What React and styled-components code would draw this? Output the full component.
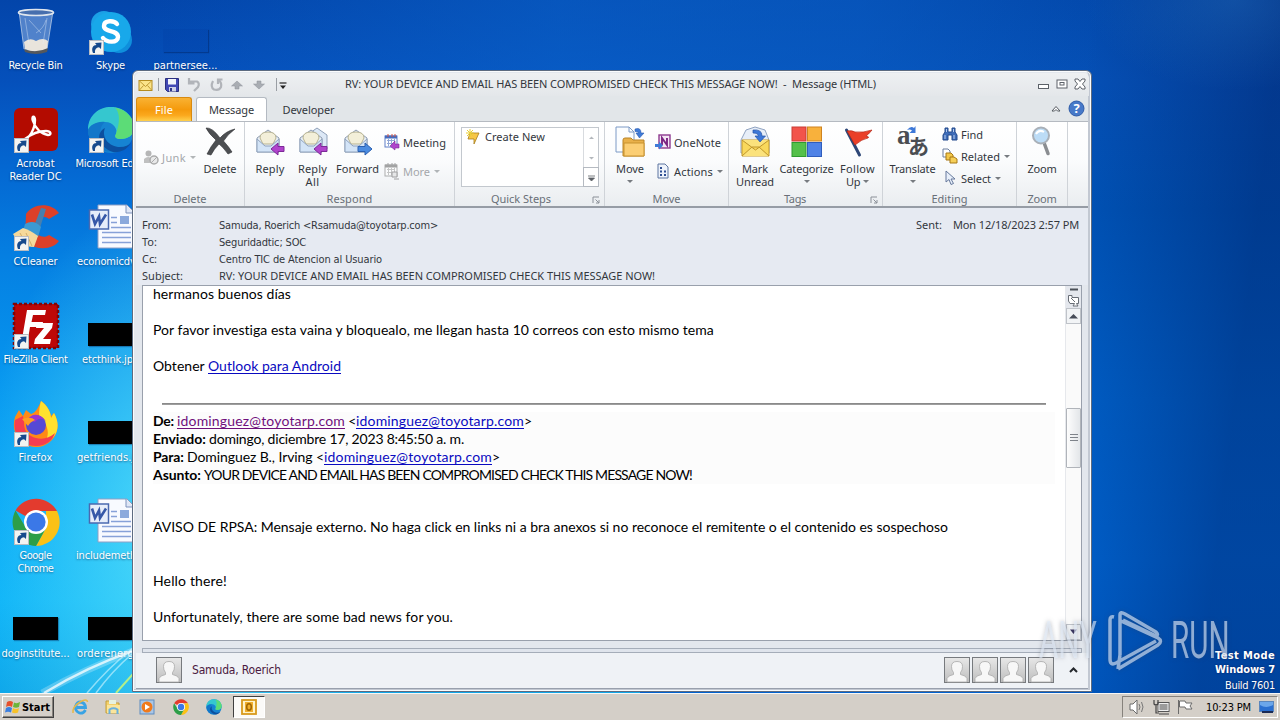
import React, { useLayoutEffect, useRef } from "react";
import styled, { createGlobalStyle } from "styled-components";

const UI = `"Noto Sans", "Open Sans", sans-serif`;
const TAHOMA = `"DejaVu Sans Condensed", "DejaVu Sans", sans-serif`;
const BODY = `Lato, "Open Sans", sans-serif`;

const Global = createGlobalStyle`
  * { box-sizing: border-box; }
  body { margin: 0; overflow: hidden; font: 11px/13px ${UI}; color: #33373d; }
  svg { display: block; flex: none; }
`;

/* Text tracked so that it fills a given measure. */
const Tracked = styled.span`
  display: inline-block;
  white-space: pre;
`;
function Fit({ w, children, ...rest }) {
  const ref = useRef(null);
  useLayoutEffect(() => {
    const el = ref.current;
    el.style.letterSpacing = "0px";
    const n = el.textContent.length;
    el.style.letterSpacing = `${(w - el.getBoundingClientRect().width) / n}px`;
  }, [w, children]);
  return <Tracked ref={ref} {...rest}>{children}</Tracked>;
}

/* ---------- desktop ---------- */
const Screen = styled.div`
  position: relative;
  width: 1280px;
  height: 720px;
  overflow: hidden;
  display: flex;
  flex-direction: column;
`;
const Wallpaper = styled.div`
  flex: 1;
  position: relative;
  overflow: hidden;
  background:
    linear-gradient(130deg, transparent 1210px, rgba(110, 180, 230, 0.28) 1214px, rgba(60, 140, 210, 0.06) 1219px) 0 0 / 100% 62px no-repeat,
    radial-gradient(150px 90px at 1235px 0, rgba(50, 130, 205, 0.3), transparent),
    radial-gradient(220px 330px at 190px 520px, rgba(110, 240, 250, 0.75), transparent) no-repeat,
    linear-gradient(90deg, transparent 133px, rgba(10, 100, 205, 0.55) 560px, rgba(10, 95, 200, 0.5) 860px, transparent 1100px) 0 0 / 1280px 72px no-repeat,
    linear-gradient(180deg, #0345aa 0, #0550bb 80px, #0468d2 170px, #0580e2 260px, #0694ee 370px, #06a4f5 480px, #0cb2f8 600px, #10a8ea 693px) 0 0 / 640px 100% no-repeat,
    linear-gradient(97deg, transparent 1085px, rgba(0, 24, 88, 0.42) 1275px),
    linear-gradient(180deg, #0349ac 0, #0550b6 80px, #0054b8 210px, #0062cc 400px, #0067d6 560px, #0062d0 693px);
`;
const Beams = styled.svg`
  position: absolute;
  left: 0;
  bottom: 0;
`;
const IconGrid = styled.div`
  display: grid;
  grid-template-columns: repeat(3, 75px);
  grid-auto-rows: 98px;
  grid-auto-flow: column;
  grid-template-rows: repeat(7, 98px);
  margin-left: -2px;
`;
const Shortcut = styled.div`
  display: flex;
  flex-direction: column;
  align-items: center;
  padding-top: 8px;
  color: #fff;
  font: 11px/13px ${TAHOMA};
  text-shadow: 0 1px 2px rgba(0, 20, 60, 0.5);
`;
const Picture = styled.div`
  position: relative;
  width: 48px;
  height: 48px;
  margin-bottom: 3px;
  display: flex;
  align-items: center;
  justify-content: center;
`;
const ArrowBadge = styled.svg`
  position: absolute;
  left: 2px;
  bottom: 1px;
`;
const Thumb = styled.div`
  width: 45px;
  height: 23px;
  margin-top: 17px;
  background: ${(p) => (p.$clear ? "rgba(0,50,150,.12)" : "#000")};
  box-shadow: 1px 1px 1px rgba(0, 20, 70, 0.35);
`;

const Arrow = () => (
  <ArrowBadge width="15" height="15" viewBox="0 0 15 15">
    <rect x=".5" y=".5" width="14" height="14" fill="#f4f4f2" stroke="#b9bcc2" />
    <path d="M4 13C2 8 4 5 7.500 5L6 3 12.500 2.500 12 9 10 7.200C7 7.500 5.500 9.500 6 13Z" fill="#174a8c" />
  </ArrowBadge>
);
const Bin = () => (
  <svg width="40" height="48" viewBox="0 0 40 48">
    <path d="M3 3L8 41Q20 47 31 41L37 3Z" fill="#83a9dc" fillOpacity=".6" stroke="#b9cbe6" strokeWidth=".8" />
    <path d="M8 34Q14 29 20 33Q27 29 32 33L31 41Q20 46 9 41Z" fill="#e9e4dc" />
    <path d="M8 41Q20 46 32 40L31 44Q20 48 9 44Z" fill="#55585c" />
    <ellipse cx="20" cy="4.500" rx="17.500" ry="3" fill="#476fae" stroke="#dfe6ee" strokeWidth="1.600" />
    <path d="M9 10L13 36M31 10L27 36M13 12L25 25M30 12Q28 20 20 25" stroke="#e4edfa" strokeOpacity=".4" fill="none" />
  </svg>
);
const Skype = () => (
  <svg width="44" height="46" viewBox="0 0 44 46">
    <circle cx="15" cy="15" r="13" fill="#1ba0e6" />
    <circle cx="30" cy="31" r="13" fill="#0f8fdc" />
    <circle cx="22" cy="23" r="20" fill="#18a8ea" />
    <path d="M28 15C25 11 15 11 15 17C15 24 29 20 29 28C29 34 18 34 14 29" fill="none" stroke="#fff" strokeWidth="4.400" strokeLinecap="round" />
  </svg>
);
const Acrobat = () => (
  <svg width="46" height="46" viewBox="0 0 46 46">
    <rect x="1" y="1" width="44" height="43" rx="6" fill="#b30b00" />
    <path d="M11 33C16 31 22 23 22 13C22 8 18 9 20 14C22 21 28 27 35 28C39 28 38 24 33 24C25 24 17 28 12 32" fill="none" stroke="#fff" strokeWidth="2.400" />
  </svg>
);
const Edge = ({ s = 48 }) => (
  <svg width={s} height={s} viewBox="0 0 48 48">
    <circle cx="24" cy="24" r="23" fill="#1684d2" />
    <path d="M1 24C1 9 12 1 24 1C38 1 47 11 47 22C47 29 41 33 34 33C29 33 27 31 29 28C31 24 27 16 18 16C9 16 3 20 1 24Z" fill="#35c7cf" />
    <path d="M28 1.500C40 4 47 12 47 22C47 29 41 33 34 33C29 33 27 31 29 28C31 22 35 9 28 1.500Z" fill="#5cdc77" />
    <path d="M18 16C10 22 12 38 27 45C15 48 1 38 1 24C3 19 10 15 18 16Z" fill="#1277c9" />
    <path d="M18 22C14 31 22 41 33 41C38 41 42 39 44 37C39 45 31 47 26 46C11 41 8 27 18 22Z" fill="#0c4f9f" />
  </svg>
);
const CCleaner = () => (
  <svg width="48" height="48" viewBox="0 0 48 48">
    <path d="M47 9C39-2 21-1 14 10L13 36C15 40 19 42 23 43C33 46 43 43 47 37L37 31C32 35 24 32 23 24C22 15 31 10 37 15Z" fill="#dc4029" />
    <path d="M29 4L34 5 28 24 22 22Z" fill="#477fae" />
    <path d="M13 20Q22 15 29 23L26 33 11 27Z" fill="#3b9ad3" />
    <path d="M11 24Q18 26 26 32L22 43Q8 43 1 30Z" fill="#f5d99b" />
    <path d="M8 29L15 42M14 29L20 42" stroke="#d5ad66" />
  </svg>
);
const FileZilla = () => (
  <svg width="48" height="48" viewBox="0 0 48 48">
    <rect x="2" y="2" width="44" height="44" fill="#bd0808" stroke="#7e0508" strokeWidth="2.500" strokeDasharray="3 2" />
    <path d="M10 37L15 8H34L33 13H21L19.500 20H31L30 25H18L16 37Z" fill="#fff" />
    <path d="M25 21H41L40 26 31 37H39L38 42H22L23 37 32 26H24Z" fill="#fff" />
  </svg>
);
const Firefox = () => (
  <svg width="48" height="48" viewBox="0 0 48 48">
    <path d="M3 17L7 10 11 16 14 10 19 14C24 13 27 6 29 1C35 5 38 11 39 16L42 13C52 31 39 47 24 47C10 47-2 34 3 17Z" fill="#ff8a16" />
    <path d="M29 1C36 6 39 13 39 18L42 13C50 27 44 40 32 43C40 33 34 22 27 16C27 9 28 4 29 1Z" fill="#ffe12e" />
    <path d="M3 20C0 35 11 46 24 46C34 46 41 40 43 33C36 40 26 40 19 36C13 33 12 27 12 22L11 16Z" fill="#f53d51" />
    <circle cx="24" cy="25" r="10" fill="#5549d5" />
    <path d="M15 20Q24 9 34 21C29 17 25 19 23 22Z" fill="#9b34d0" />
    <path d="M10 19Q19 16 23 20Q18 22 16 26Z" fill="#ff9e22" />
  </svg>
);
const Chrome = ({ s = 48 }) => (
  <svg width={s} height={s} viewBox="0 0 48 48">
    <path d="M24 24L3.500 12.500A24 24 0 0 1 45 13H24Z" fill="#e33b2e" />
    <path d="M45 13A24 24 0 0 1 24 48L34 30L34 13Z" fill="#fbc116" />
    <path d="M3.500 12.500A24 24 0 0 0 24 48L34 30L14 30Z" fill="#2d9e48" />
    <circle cx="24" cy="24" r="12" fill="#fff" />
    <circle cx="24" cy="24" r="9.600" fill="#3b78e7" />
  </svg>
);
const WordDoc = () => (
  <svg width="48" height="48" viewBox="0 0 48 48">
    <path d="M11 1H40L47 8V44H11Z" fill="#f8faff" stroke="#8f9fc4" />
    <path d="M39 1V9H47" fill="#dfe6f5" stroke="#7f93bd" />
    <path d="M24 13.500H30M24 18.500H30M24 23.500H44M15 28.500H44M15 33.500H44M15 38.500H44" stroke="#87a1d8" strokeWidth="1.500" />
    <rect x="33" y="12" width="9" height="8" fill="#8ba9dc" />
    <rect x="2.500" y="6" width="19" height="19" fill="#e6edfa" stroke="#4a69b0" strokeWidth="1.500" />
    <path d="M5 10.500L8 20 12 12.500 13 20 19 10.500" fill="none" stroke="#3658a8" strokeWidth="2.600" />
  </svg>
);

const desktop = [
  { icon: <Bin />, label: [["Recycle Bin", 54]] },
  { icon: <Acrobat />, link: true, label: [["Acrobat", 38], ["Reader DC", 52]] },
  { icon: <CCleaner />, link: true, label: [["CCleaner", 44]] },
  { icon: <FileZilla />, link: true, label: [["FileZilla Client", 64]] },
  { icon: <Firefox />, link: true, label: [["Firefox", 34]] },
  { icon: <Chrome />, link: true, label: [["Google", 32], ["Chrome", 36]] },
  { icon: <Thumb />, label: [["doginstitute...", 68]] },
  { icon: <Skype />, link: true, label: [["Skype", 29]] },
  { icon: <Edge />, link: true, label: [["Microsoft Edge", 70]] },
  { icon: <WordDoc />, label: [["economicdv...", 67]] },
  { icon: <Thumb />, label: [["etcthink.jpg", 57]] },
  { icon: <Thumb />, label: [["getfriends.j...", 67]] },
  { icon: <WordDoc />, label: [["includemeth...", 69]] },
  { icon: <Thumb />, label: [["orderenerg...", 67]] },
  { icon: <Thumb $clear />, label: [["partnersee...", 64]] },
];

/* ---------- message window ---------- */
const Window = styled.section`
  position: absolute;
  left: 132px;
  top: 70px;
  width: 960px;
  height: 622px;
  padding: 2px 3px 2px;
  display: flex;
  flex-direction: column;
  background: #e3e7ed;
  border: 1px solid #5d6b80;
  border-radius: 6px 6px 0 0;
  box-shadow: inset 0 0 0 1px #fbfcfd, inset -2px -1px 0 1px #c2c8d2;
`;
const TitleBar = styled.header`
  display: flex;
  align-items: center;
  height: 23px;
  margin: 0 -1px;
  padding: 0 3px 0 2px;
  border-radius: 5px 5px 0 0;
  background: linear-gradient(#eef0f2, #e4e7ea);
`;
const QuickBar = styled.div`
  display: flex;
  width: 208px;
  height: 16px;
  align-items: center;
`;
const Title = styled.div`
  flex: 1;
  padding-bottom: 2px;
`;
const Controls = styled.div`
  display: flex;
  gap: 6px;
  align-items: center;
  margin-top: -2px;
`;
const Tabs = styled.nav`
  display: flex;
  height: 25px;
  background: #e2e6e9;
  align-items: flex-end;
`;
const Tab = styled.div`
  width: ${(p) => p.$w}px;
  height: 24px;
  display: flex;
  align-items: center;
  justify-content: center;
  ${(p) => p.$kind === "file" && `
    color: #fff;
    border: 1px solid #d88a10;
    border-bottom: 0;
    border-radius: 3px 3px 0 0;
    background: linear-gradient(#f9b233, #f59a0c 50%, #fba81d 75%, #ffd04c);
    margin-right: 4px;
  `}
  ${(p) => p.$kind === "active" && `
    height: 25px;
    padding-bottom: 2px;
    margin-bottom: -1px;
    background: #fff;
    border: 1px solid #b4bac2;
    border-bottom: 0;
    border-radius: 3px 3px 0 0;
  `}
`;
const TabTools = styled.div`
  margin-left: auto;
  display: flex;
  align-items: center;
  gap: 7px;
  height: 25px;
  padding-right: 3px;
`;
const Ribbon = styled.div`
  display: flex;
  height: 87px;
  border-top: 1px solid #b5bac1;
  border-bottom: 2px solid #969ca5;
  background: linear-gradient(#fff, #fbfcfd 45%, #eaedf0);
`;
const Group = styled.div`
  width: ${(p) => p.$w}px;
  display: flex;
  flex-direction: column;
  border-right: 1px solid #cfd3d8;
`;
const GroupBody = styled.div`
  display: flex;
  height: 70px;
  padding-left: ${(p) => p.$pad || 0}px;
`;
const GroupName = styled.div`
  position: relative;
  height: 14px;
  text-align: center;
  line-height: 14px;
  color: #696f78;
  padding-right: ${(p) => p.$pr || 0}px;
`;
const Launcher = styled.svg`
  position: absolute;
  right: 4px;
  top: 4px;
`;
const Big = styled.div`
  width: ${(p) => p.$w}px;
  display: flex;
  flex-direction: column;
  align-items: center;
  padding-top: 4px;
  > svg { margin-bottom: 4px; overflow: visible; }
`;
const Line = styled.span`
  display: flex;
  align-items: center;
  height: 13px;
`;
const SmallCol = styled.div`
  display: flex;
  flex-direction: column;
  padding-top: ${(p) => p.$top}px;
  padding-left: ${(p) => p.$left || 0}px;
  gap: ${(p) => p.$gap}px;
`;
const Small = styled.div`
  display: flex;
  align-items: center;
  height: 16px;
  gap: 3px;
  color: ${(p) => (p.$off ? "#a4a7ab" : "#33373d")};
  ${(p) => p.$off && "svg { filter: grayscale(1); opacity: .6; } i { opacity: .55; }"}
`;
const Caret = styled.i`
  border: 3px solid transparent;
  border-top-color: #777b80;
  border-bottom: 0;
  margin: ${(p) => p.$m || "0 0 0 1px"};
`;
const Gallery = styled.div`
  display: flex;
  width: 138px;
  height: 60px;
  margin-top: 5px;
  border: 1px solid #c3c8ce;
  background: #fff;
`;
const GalleryItem = styled.div`
  flex: 1;
  display: flex;
  align-items: flex-start;
  gap: 4px;
  padding: 1px 0 0 4px;
  span { margin-top: 1px; }
`;
const GalleryNav = styled.div`
  width: 15px;
  display: grid;
  grid-template-rows: 20px 19px 19px;
  border-left: 1px solid #d8dbdf;
  place-items: center;
  svg:last-child { outline: 1px solid #b5bac1; }
`;
const Headers = styled.dl`
  margin: 0;
  height: 77px;
  padding: 8px 9px 0 6px;
  display: grid;
  grid-template-columns: 77px 1fr auto auto;
  grid-auto-rows: 17px;
  align-items: center;
  background: #e6eaf2;
  dt, dd { margin: 0; display: flex; }
  dd { font-family: ${TAHOMA}; padding-top: 2px; }
  dt:nth-of-type(2) { margin-right: 11px; }
  dd:nth-of-type(2), dd:last-child { font-family: ${UI}; padding-top: 0; }
`;
const Wide = styled.dd`
  grid-column: 2 / 5;
`;
const Reading = styled.div`
  display: flex;
  height: 356px;
  margin: 0 6px 0 6px;
  border: 1px solid #99a0ac;
  background: #fff;
`;
const Mail = styled.article`
  flex: 1;
  color: #000;
  padding: 0 10px 0 10px;
  font: 14px/18px ${BODY};
  overflow: hidden;
  a span { text-decoration: underline; text-underline-offset: 2px; text-decoration-skip-ink: none; color: #0a0ac0; }
  a.seen span { color: #70107c; }
  > :first-child { margin-top: -1px; }
`;
const Para = styled.div`
  height: 18px;
  white-space: pre;
  display: flex;
  margin-bottom: ${(p) => p.$after ?? 18}px;
`;
const Rule = styled.div`
  height: 2px;
  margin: 0 9px 7px 9px;
  background: linear-gradient(#808080, #a8a8a8);
`;
const Quote = styled.div`
  background: #fcfcfc;
  margin-bottom: 34px;
`;
const Scroll = styled.div`
  width: 16px;
  display: flex;
  flex-direction: column;
  background: #fafafa;
  border-left: 1px solid #e6e8ec;
`;
const ScrollTop = styled.div`
  height: 22px;
  background: #e4e7ed;
`;
const ScrollButton = styled.div`
  height: 16px;
  border: 1px solid #bfc3c9;
  background: #f2f4f6;
  display: grid;
  place-items: center;
`;
const Track = styled.div`
  flex: 1;
  padding-top: 84px;
`;
const Handle = styled.div`
  height: 60px;
  border: 1px solid #b0b4ba;
  border-radius: 1px;
  background: linear-gradient(90deg, #fdfdfd, #e3e6e9);
  display: grid;
  place-items: center;
`;
const Splitter = styled.div`
  height: 5px;
  margin: 7px 6px 0;
  border: 1px solid #a5adb9;
  background: #dfe4ec;
`;
const People = styled.footer`
  flex: 1;
  display: flex;
  align-items: center;
  gap: 2px;
  margin-top: 0;
  padding: 0 6px 2px 20px;
  background: #eff2f6;
  border-bottom: 1px solid #99a0ad;
`;
const Sender = styled.div`
  flex: 1;
  padding-left: 8px;
  color: #4a1940;
  font: 12px/16px ${TAHOMA};
`;

const sv = (w, h, kids) => <svg width={w} height={h} viewBox={`0 0 ${w} ${h}`}>{kids}</svg>;
const Envelope = ({ kind }) => sv(32, 32, <>
  {kind === "all" && <path d="M10 9L20 2 30 9V23H10Z" fill="#dce8f6" stroke="#8fa0b8" />}
  <path d="M3 12L14 4 25 12V26H3Z" fill="#e9f0f8" stroke="#8d9bb0" />
  <path d="M6 12Q6 6 14 6Q22 6 22 12L19 18H9Z" fill="#f3efd9" stroke="#b8b391" />
  <path d="M3 13L11 20H17L25 13V26H3Z" fill="#d3e4f7" stroke="#8fa2bc" />
  {kind === "forward"
    ? <path d="M16 20.500H23V17L30 23 23 29V25.500H16Z" fill="#4a8be0" stroke="#2a5fb0" />
    : <path d="M30 20.500H24V17L17 23 24 29V25.500H30Z" fill="#b044cc" stroke="#7d2a98" />}
</>);
const DeleteX = () => sv(32, 32, <path d="M2 2Q8 1 16 12Q22 5 31 3Q24 8 19.500 15Q25 21 28 26L24 28Q19 21 15 18Q10 23 7 29L3 28Q7 20 12 14Q5 8 2 2Z" fill="#4d4f52" stroke="#2d2f32" strokeWidth=".6" />);
const Junk = () => sv(16, 16, <><circle cx="5.500" cy="4.500" r="3" fill="#888" /><path d="M1 14V10Q5 6 10 10V14Z" fill="#999" /><circle cx="11" cy="11" r="4" fill="#ddd" stroke="#777" strokeWidth="1.500" /><path d="M8 14L14 8" stroke="#777" /></>);
const Cal = ({ more }) => sv(16, 17, <>
  <rect x="1" y="2" width="12" height="11" fill="#fff" stroke="#5f7fc8" /><path d="M1 3H13" stroke="#456cc0" strokeWidth="3" />
  <path d="M3 6.500H11M3 9.500H11M4.500 5V12M7.500 5V12M10.500 5V12" stroke="#90a6d6" />
  <path d="M4 0V3M8 0V3M11 0V3" stroke="#d0513e" />
  {more ? <path d="M8 9H13V14H8ZM10 16H15" fill="#ddd" stroke="#666" /> : <path d="M15 10H11V7L6 12 11 16V14H15Z" fill="#b044cc" stroke="#7d2a98" strokeWidth=".6" />}
</>);
const MoveIcon = () => sv(32, 32, <>
  <path d="M2 1H15L20 6V26H2Z" fill="#fbfdff" stroke="#7d9ac6" /><path d="M15 1V6H20" fill="none" stroke="#7d9ac6" />
  <path d="M9 14Q9 12 11 12H17L19 14H30V30H9Z" fill="#e8b04a" stroke="#b98427" /><path d="M10 17H30V30H10Z" fill="#fbce74" stroke="#c8922f" />
  <path d="M21 3Q27 1 27 7H30L25.500 12 22 7H24.500Q24 5 21 5.500Z" fill="#3f7bd8" stroke="#2a5ab0" strokeWidth=".6" />
</>);
const OneNote = () => sv(16, 16, <><rect x="4" y="1" width="11" height="13" fill="#f5e6f5" stroke="#8e3a8f" strokeWidth="1.400" /><path d="M7 11V4L12 11V4" fill="none" stroke="#7b2482" strokeWidth="1.900" /><path d="M0 10H4V7.500L8 11.500 4 15.500V13H0Z" fill="#3f7bd8" /></>);
const Actions = () => sv(16, 16, <><path d="M3 1H10L13 4V15H3Z" fill="#eef3fb" stroke="#5d74a0" /><path d="M5 5H7M5 8.500H7M5 12H7M9 8.500H11M9 12H11" stroke="#2f4f93" strokeWidth="2" /></>);
const Unread = () => sv(32, 32, <><path d="M2 14L7 4 16 1 26 4 30 14V27H2Z" fill="#e7eef8" stroke="#8fa2c0" /><path d="M3 14H30V30H3Z" fill="#f9d85b" stroke="#c49a2b" /><path d="M3 30L13 21H20L30 30M3 14L16.500 24 30 14" fill="#fbe27c" stroke="#bf962c" /><path d="M14 4Q23 3 23 10H26.500L21 16 16 10H19.500Q19 7 14 7Z" fill="#3d78d8" stroke="#2655a8" strokeWidth=".7" /></>);
const Categorize = () => sv(32, 32, [["1", "1", "#f2544b", "#c93c34"], ["16.500", "1", "#f8b13c", "#cf8420"], ["1", "16.500", "#54c04a", "#2f9a30"], ["16.500", "16.500", "#4f82e6", "#2f5dbd"]].map(([x, y, f, s]) => <rect key={f} x={x} y={y} width="14" height="14" fill={f} stroke={s} />));
const Flag = () => sv(32, 32, <><path d="M4.500 4L17.500 29" stroke="#2e4777" strokeWidth="3" strokeLinecap="round" /><path d="M5 5Q10 4 13 6Q21 7 30 4Q26 9 24 10Q28 11 26 12Q20 13 13 19Z" fill="#ea4029" stroke="#b52615" strokeWidth=".7" /></>);
const GlyphText = styled.text`
  font-family: ${(p) => p.$face};
  font-size: ${(p) => p.$size}px;
  font-weight: bold;
  fill: ${(p) => p.$fill || "#4a4d52"};
`;
const Translate = () => sv(32, 32, <><GlyphText $face={`"Liberation Serif", serif`} $size={27} x="0" y="18">a</GlyphText><GlyphText $face={`"Noto Sans CJK JP", sans-serif`} $size={21} x="11" y="28">あ</GlyphText><path d="M10 4Q14-1 17 2L18.500 0V7H12.500L15 4.500Q13 3 10 4Z" fill="#3d78d8" /></>);
const Find = () => sv(16, 16, <><path d="M3 2H6V6H10V2H13V6L15 9V14H10V9H6V14H1V9L3 6Z" fill="#3e6cb8" stroke="#244a8c" /><path d="M3 9V13M12 9V13M4.500 3V6M11.500 3V6" stroke="#b7cdf0" /></>);
const Related = () => sv(16, 16, <><path d="M1 1H6L8 3V9H1Z" fill="#fff" stroke="#6c7f9f" /><path d="M4 5H9L11 7V12H4Z" fill="#f3c84b" stroke="#a77916" /><path d="M8 9H12L15 11V15H8Z" fill="#f6cf58" stroke="#a77916" /></>);
const Select = () => sv(16, 16, <path d="M4 1V12L7 9.500 9 14.500 11.500 13.500 9 9H13Z" fill="#e8effa" stroke="#66799c" />);
const ZoomIcon = () => sv(32, 32, <><path d="M18.500 18L22 27.500" stroke="#8a8d91" strokeWidth="3.500" strokeLinecap="round" /><circle cx="15" cy="9.500" r="8" fill="#bcdcf6" stroke="#a9b0b8" strokeWidth="2" /><path d="M10 8Q13 3 18 6" stroke="#fff" strokeWidth="2" fill="none" /></>);
const Avatar = () => (
  <svg width="26" height="26" viewBox="0 0 26 26">
    <defs><linearGradient id="av" x2="0" y2="1"><stop stopColor="#e8e8e8" /><stop offset="1" stopColor="#bdbdbd" /></linearGradient></defs>
    <rect x=".5" y=".5" width="25" height="25" fill="url(#av)" stroke="#777a7e" />
    <path d="M3 25V21.500Q4 18.500 9.500 17.500V15.500Q7.500 13.500 7.500 9.500Q7.500 4.500 13 4.500Q18.500 4.500 18.500 9.500Q18.500 13.500 16.500 15.500V17.500Q22 18.500 23 21.500V25Z" fill="#f7f7f7" stroke="#aaa" strokeWidth=".8" />
  </svg>
);
const LaunchIcon = () => <Launcher width="8" height="8" viewBox="0 0 8 8"><path d="M1 7V1H7M3.500 3.500L7 7M7 4V7H4" stroke="#8b9098" fill="none" /></Launcher>;

function BigButton({ w, icon, lines, caret }) {
  return (
    <Big $w={w}>
      {icon}
      {lines.map(([t, lw], i) => (
        <Line key={t}><Fit w={lw}>{t}</Fit>{caret === "inline" && i === lines.length - 1 && <Caret $m="0 0 0 3px" />}</Line>
      ))}
      {caret === "below" && <Caret $m="5px 0 0" />}
    </Big>
  );
}
function SmallButton({ icon, text, w, caret, off }) {
  return <Small $off={off}>{icon}<Fit w={w}>{text}</Fit>{caret && <Caret $m="0 0 0 1px" />}</Small>;
}

function QuickAccess() {
  return (
    <QuickBar>
      <svg width="152" height="16" viewBox="0 0 152 16">
        <rect x="2" y="3.500" width="13" height="10" fill="#fbe48a" stroke="#b48c20" /><path d="M2.500 4L8.500 9.500 14.500 4M2.500 13L6.500 8.500M14.500 13L10.500 8.500" fill="none" stroke="#c09a34" />
        <path d="M21.500 1V14" stroke="#9a9ea4" />
        <path d="M28.500 1.500H41.500V14.500H30.500L28.500 12.500Z" fill="#4148b4" stroke="#2b3080" /><rect x="31" y="2" width="8" height="5.500" fill="#f2f5fb" /><rect x="32" y="10" width="7" height="4.500" fill="#cfd3e8" /><rect x="33" y="11" width="2" height="3" fill="#303788" />
        <path d="M53 4.500H60Q63 6 61 10L57 14M52 1V6.500H57.500" stroke="#b1b4b9" strokeWidth="2.200" fill="none" />
        <path d="M76 4Q73 10 77 12.500Q82 14 84 10Q85 6 82 3.500M85.500 2.500H81V7" stroke="#b1b4b9" strokeWidth="2.200" fill="none" />
        <path d="M100 4L105.500 9H102V12H98V9H94.500Z" fill="#a9adb3" stroke="#8f939a" strokeWidth=".5" />
        <path d="M122 12L127.500 7H124V4H120V7H116.500Z" fill="#a9adb3" stroke="#8f939a" strokeWidth=".5" />
        <path d="M139.500 1V14" stroke="#9a9ea4" /><path d="M142.500 6H149.500" stroke="#222" strokeWidth="1.200" /><path d="M143 8.500H149L146 12Z" fill="#222" />
      </svg>
    </QuickBar>
  );
}

/* ---------- taskbar ---------- */
const Taskbar = styled.div`
  height: 27px;
  display: flex;
  align-items: center;
  padding: 1px 2px 1px 2px;
  background: #d4cfc8;
  border-top: 1px solid #f7f6f4;
  font: 11px/13px ${TAHOMA};
  color: #000;
`;
const Start = styled.div`
  width: 52px;
  height: 22px;
  display: flex;
  align-items: center;
  gap: 1px;
  padding-left: 2px;
  font-weight: bold;
  border: 1px solid;
  border-color: #fff #404040 #404040 #fff;
  box-shadow: inset -1px -1px #86827c;
`;
const Pinned = styled.div`
  width: 33.600px;
  height: 22px;
  display: grid;
  place-items: center;
  ${(p) => p.$on && `
    width: 32px;
    margin-left: 2px;
    background: #fbfaf8;
    border: 1px solid;
    border-color: #404040 #fff #fff #404040;
  `}
`;
const PinnedList = styled.div`
  display: flex;
  margin-left: 9px;
`;
const Tray = styled.div`
  margin-left: auto;
  width: 156px;
  height: 22px;
  display: flex;
  align-items: center;
  padding: 0 2px 0 6px;
  border: 1px solid;
  border-color: #86827c #fff #fff #86827c;
`;
const Clock = styled.span`
  margin: 0 8px 0 auto;
`;
const Mode = styled.div`
  position: absolute;
  right: 5px;
  bottom: 0;
  color: #fff;
  text-align: right;
  font: 11px/14px ${TAHOMA};
  text-shadow: 0 0 2px rgba(0, 20, 80, 0.8);
  b { display: block; }
  b:last-of-type { margin-bottom: 2px; }
`;
const Watermark = styled.div`
  position: absolute;
  left: 1039px;
  top: 609px;
  width: 192px;
  height: 64px;
  display: flex;
  align-items: center;
  justify-content: space-between;
  color: rgba(228, 238, 250, 0.62);
  filter: drop-shadow(0 0 2px rgba(50, 60, 80, 0.5));
`;
const Word = styled.span`
  width: 60px;
  font: 400 51px/64px Roboto, sans-serif;
  transform: scaleX(0.58);
  transform-origin: 0 50%;
`;

export default function App() {
  return (
    <Screen>
      <Global />
      <Wallpaper>
        <Beams width="133" height="110" viewBox="0 0 133 110" fill="none">
          <path d="M42 110Q85 86 133 68" stroke="#fff" strokeOpacity=".25" strokeWidth="7" />
          <path d="M44 110Q87 84 133 68" stroke="#fff" strokeOpacity=".75" strokeWidth="2.500" />
          <path d="M87 110Q108 85 133 65M96 110Q112 88 133 70" stroke="#d4f6ff" strokeOpacity=".6" strokeWidth="1.600" />
          <path d="M116 110L133 91" stroke="#b3ef8a" strokeWidth="2" />
        </Beams>
        <IconGrid>
          {desktop.map((d) => (
            <Shortcut key={d.label[0][0]}>
              <Picture>{d.icon}{d.link && <Arrow />}</Picture>
              {d.label.map(([t, w]) => <Fit key={t} w={w}>{t}</Fit>)}
            </Shortcut>
          ))}
        </IconGrid>
        <Mode><b><Fit w={60}>Test Mode</Fit></b><b><Fit w={60}>Windows 7</Fit></b><Fit w={50}>Build 7601</Fit></Mode>
      </Wallpaper>

      <Window>
        <TitleBar>
          <QuickAccess />
          <Title><Fit w={531}>{"RV: YOUR DEVICE AND EMAIL HAS BEEN COMPROMISED CHECK THIS MESSAGE NOW!  -  Message (HTML)"}</Fit></Title>
          <Controls>
            {sv(12, 12, <rect x=".5" y="6.500" width="10" height="4" fill="#fff" stroke="#5c6168" />)}
            {sv(12, 12, <><rect x="1" y="2" width="10" height="8" fill="#fff" stroke="#5c6168" /><rect x="4" y="4.500" width="4" height="2.500" fill="none" stroke="#5c6168" /></>)}
            {sv(12, 12, <path d="M1 1H4L6 3.500 8 1H11V3L8.500 6 11 9V11H8L6 8.500 4 11H1V9L3.500 6 1 3Z" fill="#fff" stroke="#5c6168" />)}
          </Controls>
        </TitleBar>
        <Tabs>
          <Tab $w={56} $kind="file"><Fit w={18}>File</Fit></Tab>
          <Tab $w={71} $kind="active"><Fit w={45}>Message</Fit></Tab>
          <Tab $w={83}><Fit w={52}>Developer</Fit></Tab>
          <TabTools>
            {sv(10, 8, <path d="M1 6L5 1.500 9 6H6.500L5 4.500 3.500 6Z" fill="#fff" stroke="#555a61" />)}
            {sv(17, 17, <><circle cx="8.500" cy="8.500" r="7.500" fill="#4779c9" stroke="#2f5ca8" /><GlyphText $face={UI} $size={13} $fill="#fff" x="5.500" y="13">?</GlyphText></>)}
          </TabTools>
        </Tabs>
        <Ribbon>
          <Group $w={109}>
            <GroupBody $pad={7}>
              <SmallCol $top={27}><SmallButton off icon={<Junk />} text="Junk" w={24} caret /></SmallCol>
              <BigButton w={50} icon={<DeleteX />} lines={[["Delete", 33]]} />
            </GroupBody>
            <GroupName><Fit w={33}>Delete</Fit></GroupName>
          </Group>
          <Group $w={210}>
            <GroupBody $pad={5}>
              <BigButton w={40} icon={<Envelope />} lines={[["Reply", 29]]} />
              <BigButton w={45} icon={<Envelope kind="all" />} lines={[["Reply", 29], ["All", 14]]} />
              <BigButton w={45} icon={<Envelope kind="forward" />} lines={[["Forward", 43]]} />
              <SmallCol $top={12} $left={4} $gap={13}>
                <SmallButton icon={<Cal />} text="Meeting" w={43} />
                <SmallButton off icon={<Cal more />} text="More" w={27} caret />
              </SmallCol>
            </GroupBody>
            <GroupName><Fit w={46}>Respond</Fit></GroupName>
          </Group>
          <Group $w={150}>
            <GroupBody $pad={6}>
              <Gallery>
                <GalleryItem>
                  {sv(15, 16, <><path d="M4 4H13L8 15V10H2Z" fill="#f7c647" stroke="#a77d1d" strokeWidth=".8" /><path d="M4 0V8M0 4H8M1 1L7 7M7 1L1 7" stroke="#e9cf35" /></>)}
                  <Fit w={60}>Create New</Fit>
                </GalleryItem>
                <GalleryNav>
                  {sv(9, 8, <path d="M2 5H7L4.500 2.500Z" fill="#b3b7bc" />)}
                  {sv(9, 8, <path d="M2 3H7L4.500 5.500Z" fill="#b3b7bc" />)}
                  {sv(14, 18, <path d="M4 8H11M4.500 10H10.500L7.500 13Z" fill="#5c6066" stroke="#5c6066" strokeWidth=".8" />)}
                </GalleryNav>
              </Gallery>
            </GroupBody>
            <GroupName $pr={17}><Fit w={60}>Quick Steps</Fit><LaunchIcon /></GroupName>
          </Group>
          <Group $w={124}>
            <GroupBody $pad={3}>
              <BigButton w={44} icon={<MoveIcon />} lines={[["Move", 28]]} caret="below" />
              <SmallCol $top={12} $left={3} $gap={13}>
                <SmallButton icon={<OneNote />} text="OneNote" w={47} />
                <SmallButton icon={<Actions />} text="Actions" w={39} caret />
              </SmallCol>
            </GroupBody>
            <GroupName><Fit w={28}>Move</Fit></GroupName>
          </Group>
          <Group $w={154}>
            <GroupBody $pad={4}>
              <BigButton w={44} icon={<Unread />} lines={[["Mark", 26], ["Unread", 38]]} />
              <BigButton w={59} icon={<Categorize />} lines={[["Categorize", 54]]} caret="below" />
              <BigButton w={43} icon={<Flag />} lines={[["Follow", 35], ["Up", 14]]} caret="inline" />
            </GroupBody>
            <GroupName $pr={21}><Fit w={22}>Tags</Fit><LaunchIcon /></GroupName>
          </Group>
          <Group $w={134}>
            <GroupBody $pad={4}>
              <BigButton w={51} icon={<Translate />} lines={[["Translate", 46]]} caret="below" />
              <SmallCol $top={4} $left={4} $gap={6}>
                <SmallButton icon={<Find />} text="Find" w={22} />
                <SmallButton icon={<Related />} text="Related" w={39} caret />
                <SmallButton icon={<Select />} text="Select" w={30} caret />
              </SmallCol>
            </GroupBody>
            <GroupName><Fit w={36}>Editing</Fit></GroupName>
          </Group>
          <Group $w={51}>
            <GroupBody><BigButton w={50} icon={<ZoomIcon />} lines={[["Zoom", 29]]} /></GroupBody>
            <GroupName><Fit w={29}>Zoom</Fit></GroupName>
          </Group>
        </Ribbon>
        <Headers>
          <dt><Fit w={29}>From:</Fit></dt>
          <dd><Fit w={219}>{"Samuda, Roerich <Rsamuda@toyotarp.com>"}</Fit></dd>
          <dt><Fit w={26}>Sent:</Fit></dt>
          <dd><Fit w={126}>Mon 12/18/2023 2:57 PM</Fit></dd>
          <dt><Fit w={15}>To:</Fit></dt>
          <Wide><Fit w={87}>Seguridadtic; SOC</Fit></Wide>
          <dt><Fit w={15}>Cc:</Fit></dt>
          <Wide><Fit w={163}>Centro TIC de Atencion al Usuario</Fit></Wide>
          <dt><Fit w={41}>Subject:</Fit></dt>
          <Wide><Fit w={436}>RV: YOUR DEVICE AND EMAIL HAS BEEN COMPROMISED CHECK THIS MESSAGE NOW!</Fit></Wide>
        </Headers>
        <Reading>
          <Mail>
            <Para><Fit w={138}>hermanos buenos días</Fit></Para>
            <Para><Fit w={561}>Por favor investiga esta vaina y bloquealo, me llegan hasta 10 correos con esto mismo tema</Fit></Para>
            <Para $after={28}><Fit w={55}>{"Obtener "}</Fit><a><Fit w={133}>Outlook para Android</Fit></a></Para>
            <Rule />
            <Quote>
              <Para $after={0}><b><Fit w={24}>{"De: "}</Fit></b><a className="seen"><Fit w={168}>idominguez@toyotarp.com</Fit></a><Fit w={11}>{" <"}</Fit><a><Fit w={168}>idominguez@toyotarp.com</Fit></a>{">"}</Para>
              <Para $after={0}><b><Fit w={56}>{"Enviado: "}</Fit></b><Fit w={255}>domingo, diciembre 17, 2023 8:45:50 a. m.</Fit></Para>
              <Para $after={0}><b><Fit w={34}>{"Para: "}</Fit></b><Fit w={137}>{"Dominguez B., Irving <"}</Fit><a><Fit w={168}>idominguez@toyotarp.com</Fit></a>{">"}</Para>
              <Para $after={0}><b><Fit w={51}>{"Asunto: "}</Fit></b><Fit w={488}>YOUR DEVICE AND EMAIL HAS BEEN COMPROMISED CHECK THIS MESSAGE NOW!</Fit></Para>
            </Quote>
            <Para $after={36}><Fit w={795}>AVISO DE RPSA: Mensaje externo. No haga click en links ni a bra anexos si no reconoce el remitente o el contenido es sospechoso</Fit></Para>
            <Para><Fit w={74}>Hello there!</Fit></Para>
            <Para><Fit w={300}>Unfortunately, there are some bad news for you.</Fit></Para>
          </Mail>
          <Scroll>
            <ScrollTop>{sv(15, 22, <><path d="M4 3.500H12" stroke="#4b5058" strokeWidth="2" /><path d="M2.500 9.500H6V11.500H12.500V17.500H10.500L12 20H7L8.500 17.500H4L2.500 15Z" fill="#fff" stroke="#696e76" /><path d="M5 12L9 16" stroke="#696e76" /></>)}</ScrollTop>
            <ScrollButton>{sv(9, 6, <path d="M0 5.500H9L4.500 1Z" fill="#474c58" />)}</ScrollButton>
            <Track><Handle>{sv(8, 8, <path d="M0 .5H8M0 3.500H8M0 6.500H8" stroke="#7e838a" />)}</Handle></Track>
            <ScrollButton>{sv(9, 6, <path d="M1 .5H8L4.500 5Z" fill="#3a3560" />)}</ScrollButton>
          </Scroll>
        </Reading>
        <Splitter />
        <People>
          <Avatar />
          <Sender><Fit w={89}>Samuda, Roerich</Fit></Sender>
          <Avatar /><Avatar /><Avatar /><Avatar />
          {sv(26, 10, <path d="M14 7L17.500 3.500 21 7" fill="none" stroke="#24272c" strokeWidth="2" />)}
        </People>
      </Window>

      <Taskbar>
        <Start>
          {sv(16, 16, <><path d="M2 3Q5 1 8 3L7 8Q4 6 1 8Z" fill="#e6502c" /><path d="M9 3.500Q12 5 15 3L14 8Q11 9.500 8 8Z" fill="#6bb53a" /><path d="M1 9Q4 7 7 9L6 13.500Q3 12 0 13.500Z" fill="#3a7fe0" /><path d="M8 9Q11 11 14 9L13 13.500Q10 15 7 13.500Z" fill="#f7c229" /></>)}
          <Fit w={28}>Start</Fit>
        </Start>
        <PinnedList>
          <Pinned>{sv(18, 18, <><path d="M14.500 12Q12 16 8.500 15Q4 13 4.500 8.500Q6 4 9.500 4Q14 4.500 14.500 9.500H6" fill="none" stroke="#39a3e4" strokeWidth="2.800" /><path d="M2 15Q1 9 9 4Q16 0 16.500 4" fill="none" stroke="#e5b84a" strokeWidth="1.500" /></>)}</Pinned>
          <Pinned>{sv(18, 18, <><path d="M2 3H8L10 5H15V15H2Z" fill="#f3d06b" stroke="#c49f3b" /><path d="M5 2H12V6H5Z" fill="#e7f2e0" /><path d="M3 7H16V15H3Z" fill="#fbe59b" /><path d="M5.500 16V11.500Q9.500 9 13.500 11.500V16" fill="none" stroke="#6ab1dd" strokeWidth="2" /></>)}</Pinned>
          <Pinned>{sv(18, 18, <><rect x="2" y="2" width="14" height="14" fill="#a9c6e6" stroke="#5f8dc0" /><circle cx="9" cy="9" r="5.500" fill="#f07a1c" /><path d="M7 6L12 9 7 12Z" fill="#fff" /></>)}</Pinned>
          <Pinned><Chrome s={16} /></Pinned>
          <Pinned><Edge s={16} /></Pinned>
          <Pinned $on>{sv(18, 18, <><rect x="2" y="2" width="14" height="14" fill="#fff3c9" stroke="#d89a1c" strokeWidth="1.800" /><rect x="5" y="4" width="8" height="10" fill="#f0ae2d" /><ellipse cx="9" cy="9" rx="2.300" ry="3.200" fill="none" stroke="#9f6500" strokeWidth="1.500" /></>)}</Pinned>
        </PinnedList>
        <Tray>
          {sv(68, 18, <>
            <path d="M1 6H4L8 2V16L4 12H1Z" fill="#fff" stroke="#6b6b6b" /><path d="M10 6Q12 9 10 12M12.500 4Q15.500 9 12.500 14" fill="none" stroke="#777" />
            <rect x="29" y="4.500" width="11" height="9" fill="#9b9b9b" stroke="#555" /><rect x="30" y="5.500" width="9" height="7" fill="none" stroke="#eee" /><path d="M30 16H40M25 2V6Q27 8 29 6V2M27 8V15H30" fill="none" stroke="#444" strokeWidth="1.200" />
            <path d="M49.500 2V16M50.500 3H56L57 5H63L61 8 63 11H57L56 9H50.500Z" fill="#fff" stroke="#6b6b6b" />
          </>)}
          <Clock><Fit w={45}>10:23 PM</Fit></Clock>
          {sv(16, 14, <><rect x=".5" y="1.500" width="14" height="10" fill="#2a6fd0" stroke="#5a86bd" /><path d="M1 2H14V5Q7 9 1 5Z" fill="#6ba6ea" /><path d="M3 12H14" stroke="#1b2b55" strokeWidth="2" /></>)}
        </Tray>
      </Taskbar>

      <Watermark>
        <Word>ANY</Word>
        {sv(58, 64, <path d="M8 8Q4 7 4 11V50Q4 57 10 54L50 32M14 46V6Q14 2 19 5L50 23Q53 26 50 27L17 11M12 60L52 36Q57 32 52 29L15 12M12 60L14 46" fill="none" stroke="currentColor" strokeWidth="3.500" strokeLinejoin="round" />)}
        <Word>RUN</Word>
      </Watermark>
    </Screen>
  );
}
